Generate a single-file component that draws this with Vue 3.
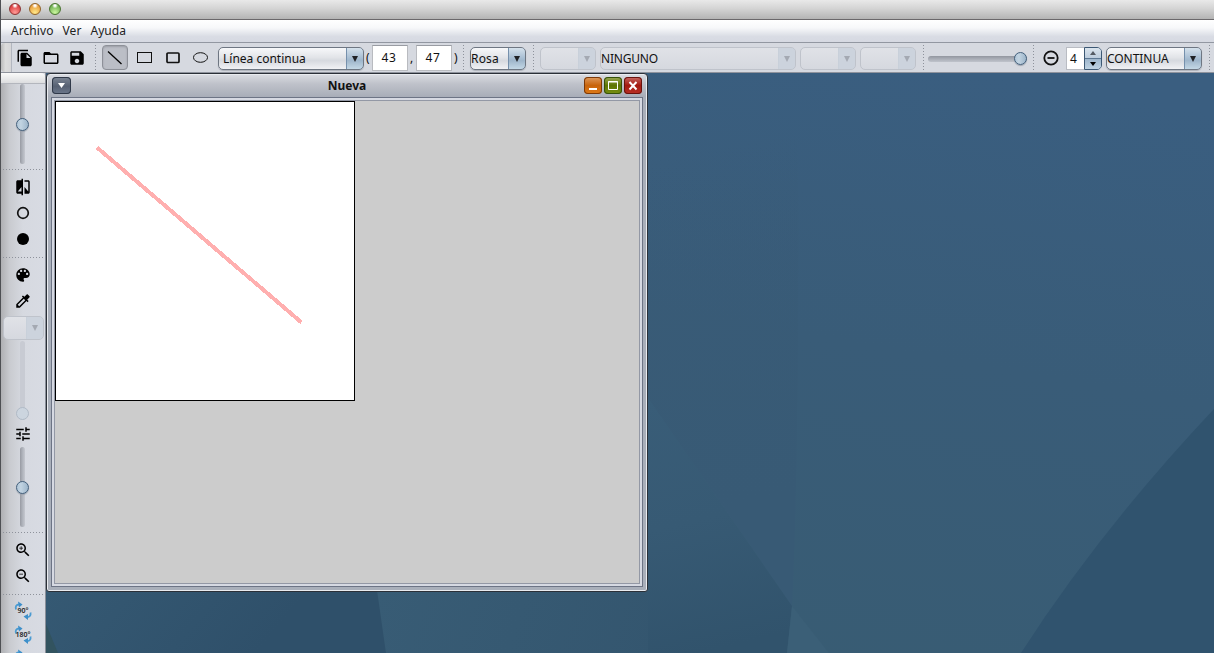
<script setup>
const menus = ['Archivo', 'Ver', 'Ayuda']

const fileIcons = [
  { name: 'new', d: 'M16 1H4c-1.100 0-2 .9-2 2v14h2V3h12V1zm-1 4 6 6v10c0 1.100-.9 2-2 2H7.990C6.890 23 6 22.100 6 21l.01-14c0-1.100.89-2 1.990-2h7zm-1 7h5.500L14 6.500V12z' },
  { name: 'open', d: 'M20 6h-8l-2-2H4c-1.100 0-1.990.9-1.990 2L2 18c0 1.100.9 2 2 2h16c1.100 0 2-.9 2-2V8c0-1.100-.9-2-2-2zm0 12H4V8h16v10z' },
  { name: 'save', d: 'M17 3H5c-1.110 0-2 .9-2 2v14c0 1.100.89 2 2 2h14c1.100 0 2-.9 2-2V7l-4-4zm-5 16c-1.660 0-3-1.340-3-3s1.340-3 3-3 3 1.340 3 3-1.340 3-3 3zm3-10H5V5h10v4z' }
]

const viewIcons = {
  compare: 'M10 3H5c-1.100 0-2 .9-2 2v14c0 1.100.9 2 2 2h5v2h2V1h-2v2zm0 15H5l5-6v6zm9-15h-5v2h5v13l-5-6v9h5c1.100 0 2-.9 2-2V5c0-1.100-.9-2-2-2z',
  palette: 'M12 3c-4.970 0-9 4.030-9 9s4.030 9 9 9c.83 0 1.500-.67 1.500-1.500 0-.39-.15-.74-.39-1.010-.23-.26-.38-.61-.38-.99 0-.83.67-1.500 1.500-1.500H16c2.760 0 5-2.240 5-5 0-4.420-4.030-8-9-8zm-5.500 9c-.83 0-1.500-.67-1.500-1.500S5.670 9 6.500 9 8 9.670 8 10.500 7.330 12 6.500 12zm3-4C8.670 8 8 7.330 8 6.500S8.670 5 9.500 5s1.500.67 1.500 1.500S10.330 8 9.500 8zm5 0c-.83 0-1.500-.67-1.500-1.500S13.670 5 14.500 5s1.500.67 1.500 1.500S15.330 8 14.500 8zm3 4c-.83 0-1.500-.67-1.500-1.500S16.670 9 17.500 9s1.500.67 1.500 1.500-.67 1.500-1.500 1.500z',
  dropper: 'M20.710 5.630l-2.340-2.340c-.39-.39-1.020-.39-1.410 0l-3.120 3.120-1.930-1.910-1.410 1.410 1.420 1.420L3 16.250V21h4.750l8.920-8.920 1.420 1.420 1.410-1.410-1.920-1.920 3.120-3.120c.4-.4.4-1.030.01-1.420zM6.920 19L5 17.080l8.060-8.060 1.920 1.920L6.920 19z',
  tune: 'M3 17v2h6v-2H3zM3 5v2h10V5H3zm10 16v-2h8v-2h-8v-2h-2v6h2zM7 9v2H3v2h4v2h2V9H7zm14 4v-2H11v2h10zm-6-4h2V7h4V5h-4V3h-2v6z'
}
const lens = 'M15.500 14h-.79l-.28-.27C15.410 12.590 16 11.110 16 9.500 16 5.910 13.090 3 9.500 3S3 5.910 3 9.500 5.910 16 9.500 16c1.610 0 3.090-.59 4.230-1.570l.27.28v.79l5 4.990L20.490 19l-4.990-5zm-6 0C7.010 14 5 11.990 5 9.500S7.010 5 9.500 5 14 7.010 14 9.500 11.990 14 9.500 14z'
const turns = ['90°', '180°', '']
</script>

<template>
  <div class="app">
    <header class="titlebar">
      <i class="light red"></i><i class="light amber"></i><i class="light green"></i>
    </header>
    <nav class="menubar"><span v-for="m in menus" :key="m">{{ m }}</span></nav>

    <div class="toolbar">
      <div class="grip"></div>
      <div class="files">
        <svg v-for="i in fileIcons" :key="i.name" class="icon" viewBox="0 0 24 24"><path :d="i.d" /></svg>
      </div>
      <i class="vsep s1"></i>
      <button class="tool active"><svg width="24" height="24"><path d="M5 5.500l13.500 12.500" /></svg></button>
      <div class="shapes">
        <svg width="16" height="12" shape-rendering="crispEdges"><rect x=".5" y=".5" width="14" height="10" /></svg>
        <svg width="15" height="12"><rect x="1" y="1" width="12" height="9.500" rx="1" stroke-width="1.700" /></svg>
        <svg width="16" height="12"><ellipse cx="7.500" cy="5.500" rx="7" ry="4.800" /></svg>
      </div>
      <div class="combo c1"><span>Línea continua</span><b></b></div>
      <span class="punct p1">(</span>
      <div class="field">43</div>
      <span class="punct p2">,</span>
      <div class="field">47</div>
      <span class="punct p3">)</span>
      <i class="vsep s2"></i>
      <div class="combo c2"><span>Rosa</span><b></b></div>
      <i class="vsep s3"></i>
      <div class="combo c3 off"><span></span><b></b></div>
      <div class="combo c4 off"><span>NINGUNO</span><b></b></div>
      <div class="combo c3b off"><span></span><b></b></div>
      <div class="combo c3b off"><span></span><b></b></div>
      <i class="vsep s4"></i>
      <div class="hslider"><i class="thumb"></i></div>
      <i class="vsep s5"></i>
      <svg class="minus" width="16" height="16"><circle cx="8" cy="8" r="6.700" /><path d="M4.500 8h7" /></svg>
      <div class="spinner">
        <span>4</span>
        <div><i class="up"></i><i class="down"></i></div>
      </div>
      <div class="combo c5"><span>CONTINUA</span><b></b></div>
      <i class="vsep s6"></i>
    </div>

    <main class="body">
      <aside class="side">
        <div class="sgrip"></div>
        <div class="vslider v1"><i class="thumb"></i></div>
        <i class="hsep h1"></i>
        <svg class="icon g1" viewBox="0 0 24 24"><path :d="viewIcons.compare" /></svg>
        <svg class="icon g2" viewBox="0 0 18 18"><circle cx="9" cy="9" r="5.300" class="ring" /></svg>
        <svg class="icon g2" viewBox="0 0 18 18"><circle cx="9" cy="9" r="6" /></svg>
        <i class="hsep h2"></i>
        <svg class="icon g3" viewBox="0 0 24 24"><path :d="viewIcons.palette" /></svg>
        <svg class="icon g2" viewBox="0 0 24 24"><path :d="viewIcons.dropper" /></svg>
        <div class="combo c6 off"><span></span><b></b></div>
        <div class="vslider v2 off"><i class="thumb"></i></div>
        <svg class="icon g4" viewBox="0 0 24 24"><path :d="viewIcons.tune" /></svg>
        <div class="vslider v3"><i class="thumb"></i></div>
        <i class="hsep h3"></i>
        <svg class="icon g5" viewBox="0 0 24 24"><path :d="lens" /><path d="M12 10h-2v2H9v-2H7V9h2V7h1v2h2v1z" /></svg>
        <svg class="icon g2" viewBox="0 0 24 24"><path :d="lens" /><path d="M7 9h5v1H7z" /></svg>
        <i class="hsep h4"></i>
        <svg v-for="t in turns" :key="t" class="turn" viewBox="0 0 20 24">
          <path d="M3 9.500C2 6 3.500 4.500 6 4.500" /><path d="M5 1.500l4.500 3-3.500 3z" class="tip" />
          <path d="M17.500 12.500c.5 3-1 4.800-3.500 4.500" /><path d="M15 14l-4.500 2.500 4.500 3.500z" class="tip" />
          <text v-if="t" x="10" y="13" text-anchor="middle">{{ t }}</text>
        </svg>
      </aside>

      <section class="desktop">
        <svg class="wall" viewBox="46 73 1168 580" preserveAspectRatio="none">
          <defs>
            <linearGradient id="base" x1=".8" y1="0" x2=".45" y2="1">
              <stop offset="0" stop-color="#3a5e80" /><stop offset=".45" stop-color="#395c78" /><stop offset="1" stop-color="#385c73" />
            </linearGradient>
            <linearGradient id="fold" gradientUnits="userSpaceOnUse" x1="640" y1="400" x2="700" y2="653">
              <stop offset="0" stop-color="#395d78" /><stop offset=".5" stop-color="#375a74" /><stop offset="1" stop-color="#31536c" />
            </linearGradient>
            <linearGradient id="mid" gradientUnits="userSpaceOnUse" x1="700" y1="150" x2="760" y2="500">
              <stop offset="0" stop-color="#385a76" stop-opacity="0" /><stop offset="1" stop-color="#385a75" />
            </linearGradient>
            <linearGradient id="pleat" gradientUnits="userSpaceOnUse" x1="377" y1="590" x2="648" y2="680">
              <stop offset="0" stop-color="#385c75" /><stop offset="1" stop-color="#34566f" />
            </linearGradient>
            <linearGradient id="left" gradientUnits="userSpaceOnUse" x1="46" y1="590" x2="200" y2="720">
              <stop offset="0" stop-color="#355973" /><stop offset="1" stop-color="#2f506a" />
            </linearGradient>
          </defs>
          <rect x="46" y="73" width="1168" height="580" fill="url(#base)" />
          <path d="M648 73H798Q800 440 792 606L648 398z" fill="url(#mid)" />
          <path d="M648 398L792 606L787 653H648z" fill="url(#fold)" />
          <path d="M377 590H648V653H386z" fill="url(#pleat)" />
          <path d="M792 606L829 653H787z" fill="#3b5f77" />
          <path d="M46 590H377L386 653H46z" fill="url(#left)" />
          <path d="M46 624L58 653H46z" fill="#32535f" />
          <path d="M1214 409Q1100 530 1021 653H1214z" fill="#30536e" />
        </svg>

        <div class="frame">
          <div class="caption">
            <span class="cbtn menu"><svg width="19" height="17"><path d="M6 6h7l-3.500 5z" fill="#fff" /></svg></span>
            <strong>Nueva</strong>
            <span class="cbtn min"><svg width="18" height="17"><path d="M5 12h8" stroke="#fff" stroke-width="2" /></svg></span>
            <span class="cbtn max"><svg width="18" height="17"><path d="M4.500 4.500h9v8h-9zM4 5h10" stroke="#fff" fill="none" /></svg></span>
            <span class="cbtn close"><svg width="18" height="17"><path d="M5.500 5l7 7.500M12.500 5l-7 7.500" stroke="#fff" stroke-width="2" /></svg></span>
          </div>
          <div class="pane">
            <div class="inner">
              <svg class="canvas" width="300" height="300" shape-rendering="crispEdges">
                <path d="M42 46.500L246.500 221.500" stroke="#ffafaf" stroke-width="4" />
              </svg>
            </div>
          </div>
        </div>
      </section>
    </main>
  </div>
</template>

<style>
body { margin: 0; overflow: hidden; }
</style>

<style scoped>
* { box-sizing: border-box; }
.app {
  width: 1214px; height: 653px; overflow: hidden;
  display: flex; flex-direction: column;
  border-left: 1px solid #4e5054;
  background: #d6d9e0; color: #111;
  font: 12px/16px "Noto Sans", "Open Sans", sans-serif;
}
.titlebar {
  flex: 0 0 20px; display: flex; gap: 8px; padding: 3px 0 0 8px;
  background: linear-gradient(#e9e9e9, #d4d4d4 45%, #b4b4b4);
  border-bottom: 1px solid #6b686b;
}
.light { width: 12px; height: 12px; border-radius: 50%; border: 1px solid #6c5a40; }
.red { background: radial-gradient(circle at 50% 15%, #fff 0 8%, transparent 30%), radial-gradient(circle at 50% 85%, #ff9c98, #dc3c3e 75%); border-color: #8c3534; }
.amber { background: radial-gradient(circle at 50% 15%, #fff 0 8%, transparent 30%), radial-gradient(circle at 50% 85%, #ffe98c, #e99c38 75%); border-color: #916329; }
.green { background: radial-gradient(circle at 50% 15%, #fff 0 8%, transparent 30%), radial-gradient(circle at 50% 85%, #ccf7a0, #6cae50 75%); border-color: #49742f; }
.menubar {
  flex: 0 0 23px; display: flex; gap: 9px; padding: 3px 0 0 10px;
  background: linear-gradient(#fff, #f7f8fa 35%, #d9dce4 75%, #d6d9e2);
  border-bottom: 1px solid #9297a1; color: #222; letter-spacing: .07px;
}
.toolbar {
  flex: 0 0 30px; display: flex; align-items: flex-start;
  border-bottom: 1px solid #8f939d; background: #d6d9e0;
}
.toolbar > * { flex: none; }
.grip { width: 11px; height: 29px; border-right: 1px solid #b2b6bf; border-radius: 4px 0 0 4px; background: linear-gradient(90deg, #bbb, #dcdcdc 45%, #d6d6d8); }
.files { display: flex; gap: 8px; padding: 6px 0 0 4px; width: 83px; }
.icon { width: 18px; height: 18px; fill: #000; display: block; flex: none; }
.vsep { width: 1px; height: 26px; margin-top: 2px; background: repeating-linear-gradient(#8e929b 0 1px, transparent 1px 3px); }
.tool.active {
  width: 26px; height: 25px; margin: 2px 0 0 6px; padding: 0;
  border: 1px solid #8e9199; border-radius: 4px; background: #bbbec6; box-shadow: inset 0 1px 2px #9b9ea6;
}
.tool svg { display: block; stroke: #000; stroke-width: 1.300; }
.shapes { display: flex; gap: 13px; padding: 9px 0 0 9px; width: 90px; }
.shapes svg { flex: none; fill: none; stroke: #111; }
.shapes svg:nth-child(3) { margin-left: -1px; }
.combo {
  height: 23px; margin-top: 4px; display: flex; overflow: hidden;
  border: 1px solid #6e7682; border-radius: 5px;
  background: linear-gradient(#f7f8fa, #e2e4e8 45%, #d6d9df 60%, #f1f2f5);
  box-shadow: 0 1px 1px #aeb2bb;
}
.combo span { flex: 1; line-height: 21px; white-space: nowrap; }
.combo b {
  width: 18px; margin: -1px; border-left: 1px solid #7590ac;
  background: linear-gradient(#d5e1ec, #a6bdd2 50%, #9fb6cb 60%, #c4d8e6); border-radius: 0 5px 5px 0;
  border-right: 1px solid #3c5874; border-bottom: 1px solid #3c5874; border-top: 1px solid #69839d;
}
.combo b::before {
  content: ""; display: block; margin: 8px auto 0; width: 0;
  border: 3.500px solid transparent; border-top: 6px solid #202226; border-bottom: 0;
}
.combo.off { background: linear-gradient(#e0e2e7, #d5d8df); border-color: #bfc3cb; box-shadow: none; }
.combo.off b { background: #ccd3dd; border-color: #bcc4cf; border-left-color: #c8d0da; }
.combo.off b::before { border-top-color: #a4a9b2; }
.c1 { width: 146px; padding-left: 4px; }
.punct { width: 8px; margin-top: 7px; }
.p1 { padding-left: 2px; }
.p2 { padding-left: 2px; }
.p3 { padding-left: 2px; width: 11px; }
.field {
  width: 36px; height: 26px; margin-top: 2px; background: #fff; text-align: center;
  border: 1px solid #b9bbc0; border-top-color: #999ca3; line-height: 24px; padding-right: 2px; letter-spacing: .6px;
}
.c2 { width: 56px; margin-left: 6px; letter-spacing: .2px; }
.s3 { margin-left: 7px; }
.c3 { width: 56px; margin-left: 6px; }
.c4 { width: 196px; margin-left: 4px; letter-spacing: -.2px; }
.c3b { width: 56px; margin-left: 4px; }
.s4 { margin-left: 7px; }
.hslider {
  width: 99px; height: 6px; margin: 13px 0 0 4px; border-radius: 3px;
  background: linear-gradient(#92969f, #aaaeb7 50%, #bfc3cb); display: flex; justify-content: flex-end;
}
.thumb {
  flex: none; width: 13px; height: 13px; border-radius: 50%; border: 1px solid #43607c;
  background: linear-gradient(90deg, #b1c6d8, #c2d4e2 35%, #9db5ca); box-shadow: 0 1px 1px #9ba3ae;
}
.hslider .thumb { margin-top: -4px; }
.s5 { margin-left: 6px; }
.minus { margin: 7px 0 0 9px; fill: none; stroke: #111; stroke-width: 1.800; }
.spinner { display: flex; width: 36px; height: 23px; margin: 4px 0 0 7px; }
.spinner span { width: 18px; background: #fff; border: 1px solid #b9bcc3; border-right: 0; line-height: 22px; padding-left: 3px; }
.spinner div { width: 18px; border: 1px solid #3c5874; border-radius: 0 5px 5px 0; display: flex; flex-direction: column; overflow: hidden; }
.spinner i { flex: 1; display: flex; justify-content: center; align-items: center; background: linear-gradient(#dae4ed, #bdcddd); }
.spinner i::before { content: ""; border: 3px solid transparent; }
.spinner .up::before { border-bottom: 4px solid #555b63; border-top: 0; }
.spinner .down { border-top: 1px solid #5d7893; background: linear-gradient(#9eb6cc, #bfd3e3); }
.spinner .down::before { border-top: 4px solid #000; border-bottom: 0; }
.c5 { width: 96px; margin-left: 4px; letter-spacing: -.05px; }
.s6 { margin-left: 7px; }

.body { flex: 1; min-height: 0; display: flex; }
.side {
  flex: 0 0 45px; display: flex; flex-direction: column; align-items: center; overflow: hidden;
  background: linear-gradient(90deg, #afb0b3, #c9cbd0 20%, #d6d9e0 50%, #d8dbe3);
  border-right: 1px solid #8a8f99;
}
.side > * { flex: none; }
.sgrip { width: 100%; height: 11px; background: linear-gradient(#fafafa, #dcdddf); border-bottom: 1px solid #b3b6bd; border-radius: 0 4px 0 0; }
.vslider { width: 5px; margin-right: 1px; border-radius: 3px; background: linear-gradient(90deg, #989ba3, #afb3bb 50%, #c5c8cf); display: flex; justify-content: center; }
.v1 { height: 80px; align-items: center; }
.v2 { height: 79px; margin-top: 1px; align-items: flex-end; }
.v3 { height: 80px; margin-top: 4px; align-items: center; }
.vslider.off { background: #c8cbd3; }
.vslider.off .thumb { background: #ccd5df; border-color: #b0bac6; box-shadow: none; }
.hsep { width: 41px; height: 1px; background: repeating-linear-gradient(90deg, #8e929b 0 1px, transparent 1px 3px); }
.h1 { margin-top: 5px; }
.g1 { margin-top: 8px; }
.g2 { margin-top: 8px; }
.ring { fill: none; stroke: #111; stroke-width: 1.700; }
.h2 { margin-top: 9px; }
.g3 { margin-top: 8px; }
.c6 { width: 41px; height: 24px; margin-top: 6px; }
.g4 { margin-top: 5px; }
.h3 { margin-top: 5px; }
.g5 { margin-top: 8px; }
.h4 { margin-top: 9px; }
.turn { width: 20px; height: 24px; margin-top: 5px; fill: none; stroke: #4a9bd2; stroke-width: 1.800; overflow: visible; }
.turn + .turn { margin-top: 0; }
.turn .tip { fill: #3d8fca; stroke: none; }
.turn text { fill: #222; stroke: none; font: 600 7px "Noto Sans", sans-serif; }

.desktop { flex: 1; min-width: 0; display: grid; }
.wall { grid-area: 1 / 1; width: 1168px; height: 580px; display: block; }
.frame {
  grid-area: 1 / 1; z-index: 1; width: 602px; height: 519px; display: flex; flex-direction: column;
  border: 1px solid #2b3038; border-radius: 4px 4px 3px 3px;
  background: #a9afba; box-shadow: inset 0 0 0 1px #e9ebef; padding: 1px 4px 4px;
}
.caption {
  flex: 0 0 22px; margin: 0 -3px; padding: 2px 2px 0 4px; display: flex; align-items: flex-start;
  background: linear-gradient(#d9dbe1, #bfc2ca 40%, #a8adb8);
}
.caption strong { flex: 1; text-align: center; line-height: 17px; padding-left: 37px; font-size: 12px; }
.cbtn { width: 18px; height: 17px; border-radius: 4px; margin-right: 2px; }
.cbtn svg { display: block; }
.menu { width: 19px; background: linear-gradient(#7d8695, #566072 55%, #6d788c); box-shadow: inset 0 0 0 1px #303949; }
.min { background: linear-gradient(#df9b60, #c8640c 50%, #de7a18); box-shadow: inset 0 0 0 1px #7c3908; }
.max { background: linear-gradient(#9ba955, #5c7403 50%, #789013); box-shadow: inset 0 0 0 1px #35510a; }
.close { background: linear-gradient(#c86862, #a31a10 50%, #ba3026); box-shadow: inset 0 0 0 1px #68120d; }
.pane { flex: 1; min-height: 0; border: 1px solid #6d7485; background: #d6d9e2; padding: 2px; display: flex; }
.inner { flex: 1; border: 1px solid #9398a5; background: #ccc; }
.canvas { display: block; background: #fff; outline: 1px solid #000; outline-offset: -1px; }
</style>
